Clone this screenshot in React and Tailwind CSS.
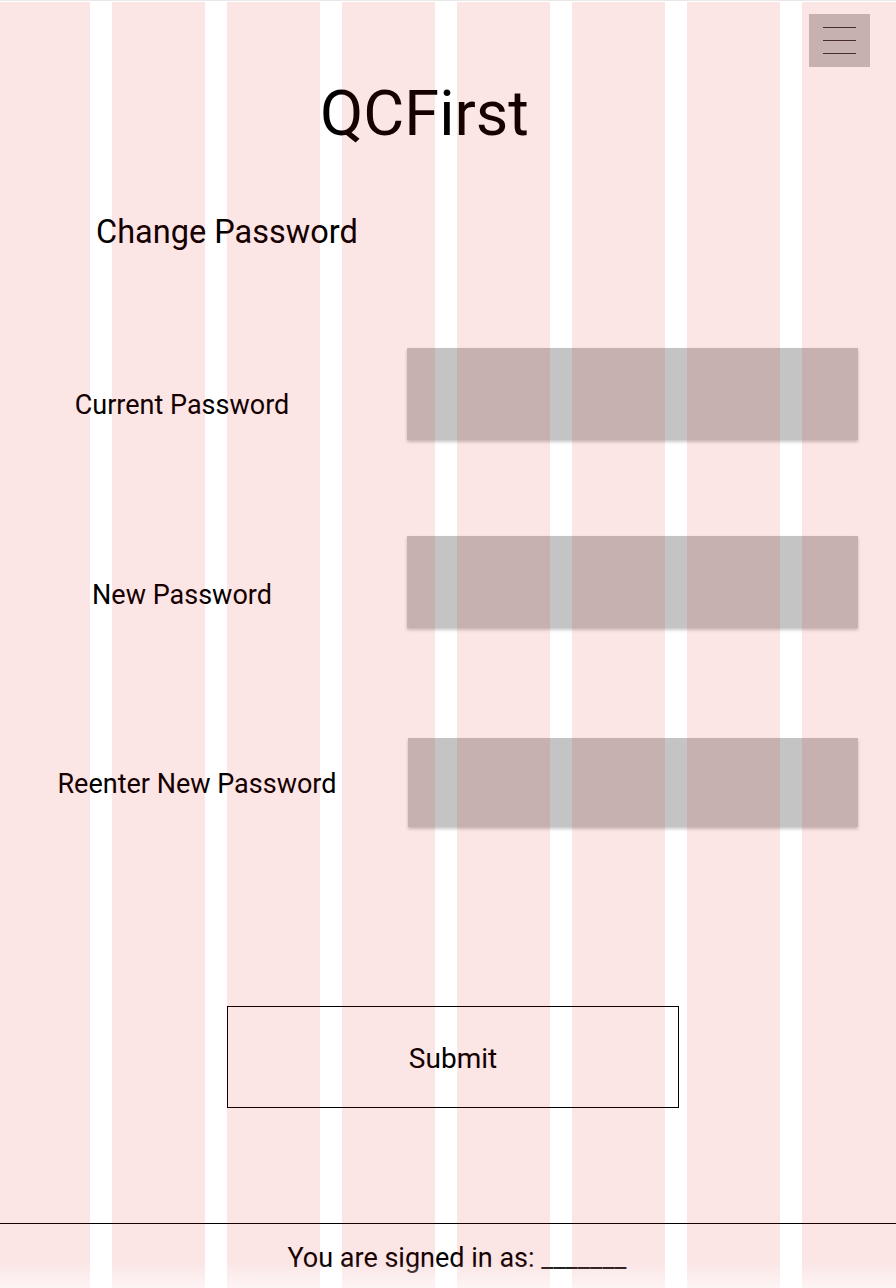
export default function App() {
  const cols = [90, 93, 93, 93, 93, 93, 93, 94]

  const fields = [
    { label: 'Current Password', top: 'mt-0', labelTop: 'mt-[44px]', pad: '', h: 'h-[92px]', ml: 'ml-[43px]', w: 'w-[451px]' },
    { label: 'New Password', top: 'mt-[96px]', labelTop: 'mt-[46px]', pad: '', h: 'h-[92px]', ml: 'ml-[43px]', w: 'w-[451px]' },
    { label: 'Reenter New Password', top: 'mt-[110px]', labelTop: 'mt-[33px]', pad: 'pl-[30px]', h: 'h-[89px]', ml: 'ml-[44px]', w: 'w-[450px]' },
  ]

  return (
    <div className="relative w-[896px] h-[1288px] overflow-hidden bg-white border-t border-[#e8e8e8] text-black" style={{ fontFamily: 'Roboto, "Noto Sans", sans-serif' }}>
      {/* Header */}
      <div className="flex justify-end pt-[13px] pr-[26px]">
        <button className="w-[61px] h-[53px] bg-[#c4c4c4] flex flex-col items-center justify-center gap-[11.5px]" aria-label="Menu">
          <span className="block w-[33px] h-[1.5px] bg-[#3a3030]" />
          <span className="block w-[33px] h-[1.5px] bg-[#3a3030]" />
          <span className="block w-[33px] h-[1.5px] bg-[#3a3030]" />
        </button>
      </div>

      <h1 className="ml-[320px] mt-[15px] text-[63px] leading-none font-normal">QCFirst</h1>

      <h2 className="ml-[96px] mt-[71px] text-[32.5px] leading-none font-normal">Change Password</h2>

      {/* Form */}
      <form className="mt-[99.5px]" onSubmit={(e) => e.preventDefault()}>
        {fields.map((f) => (
          <div key={f.label} className={`flex items-start ${f.top}`}>
            <label className={`w-[364px] text-center text-[27px] leading-none ${f.labelTop} ${f.pad}`}>
              {f.label}
            </label>
            <input
              type="password"
              className={`${f.ml} ${f.w} ${f.h} bg-[#c4c4c4] shadow-[0_2px_3px_rgba(0,0,0,0.22)] outline-none`}
            />
          </div>
        ))}

        <div className="flex mt-[179px] ml-[227px]">
          <button type="submit" className="w-[452px] h-[102px] pt-[4px] border border-black flex items-center justify-center text-[28px] leading-none">
            Submit
          </button>
        </div>
      </form>

      {/* Footer */}
      <div className="mt-[115px] h-px bg-black" />
      <p className="mt-[21px] pl-[18px] text-center text-[27px] leading-none">You are signed in as: _______</p>

      {/* Layout grid overlay */}
      <div className="absolute inset-x-0 top-px bottom-0 flex pointer-events-none">
        {cols.map((w, i) => (
          <div key={i} className="flex">
            {i > 0 && <div className="w-[22px]" />}
            <div className="h-full bg-[rgba(220,0,0,0.1)]" style={{ width: w }} />
          </div>
        ))}
      </div>
      <div className="absolute inset-x-0 bottom-0 h-[26px] bg-gradient-to-b from-transparent to-white/60 pointer-events-none" />
    </div>
  )
}
